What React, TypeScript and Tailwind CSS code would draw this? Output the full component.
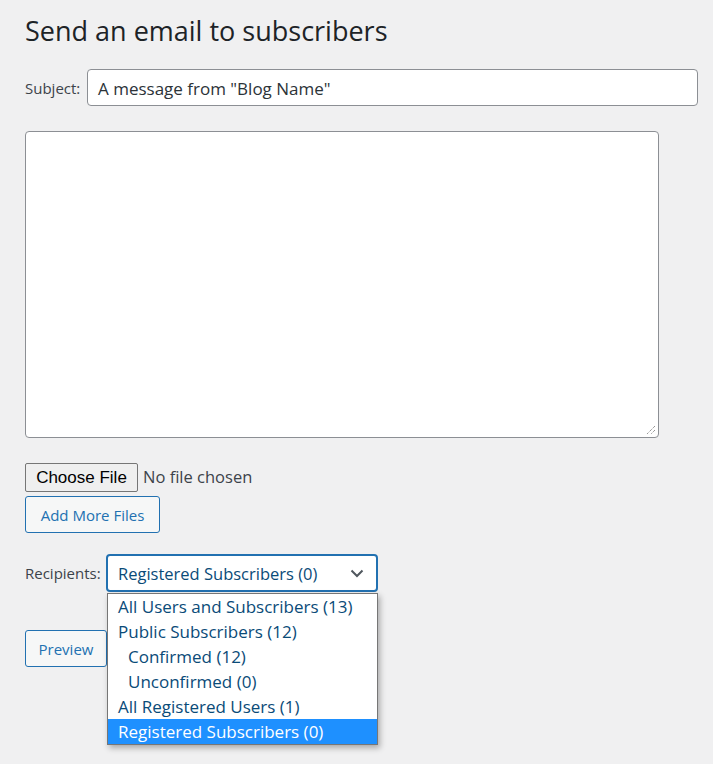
import React from "react";

const sans = { fontFamily: '"Open Sans", "Noto Sans", Arial, sans-serif' };

export default function App() {
  const options = [
    { label: "All Users and Subscribers (13)", indent: false },
    { label: "Public Subscribers (12)", indent: false },
    { label: "Confirmed (12)", indent: true },
    { label: "Unconfirmed (0)", indent: true },
    { label: "All Registered Users (1)", indent: false },
    { label: "Registered Subscribers (0)", indent: false, selected: true },
  ];
  return (
    <div className="min-h-[764px] w-[713px] bg-[#f0f0f1] pl-[25px] pt-[12px]" style={sans}>
      <h1 className="m-0 text-[27px] leading-[38px] font-normal text-[#1d2327]">
        Send an email to subscribers
      </h1>
      <div className="mt-[19px] flex items-center">
        <label className="w-[62px] pt-[2px] text-[15px] text-[#3c434a]">Subject:</label>
        <div className="flex h-[37px] w-[611px] items-center rounded-[4px] border border-[#8c8f94] bg-white px-[10px] pt-[2px] text-[17px] text-[#2c3338]">
          A message from "Blog Name"
        </div>
      </div>
      <div className="relative mt-[25px] h-[307px] w-[634px] rounded-[4px] border border-[#8c8f94] bg-white">
        <svg className="absolute bottom-[2px] right-[2px]" width="10" height="10" viewBox="0 0 10 10">
          <line x1="9" y1="1" x2="1" y2="9" stroke="#6b6b6b" strokeWidth="1" strokeDasharray="1 1" />
          <line x1="9" y1="5" x2="5" y2="9" stroke="#6b6b6b" strokeWidth="1" strokeDasharray="1 1" />
        </svg>
      </div>
      <div className="mt-[25px] flex items-center">
        <div
          className="flex h-[29px] w-[113px] items-center justify-center whitespace-nowrap rounded-[2px] border border-[#767676] bg-[#efefef] text-[17px] text-black"
          style={{ fontFamily: '"Liberation Sans", Arial, sans-serif' }}
        >
          Choose File
        </div>
        <span className="ml-[5px] whitespace-nowrap text-[16.5px] text-[#3c434a]">No file chosen</span>
      </div>
      <div className="mt-[4px] flex h-[37px] w-[135px] items-center justify-center rounded-[3px] border border-[#2271b1] bg-[#f6f7f7] pt-[1px] text-[15px] text-[#2271b1]">
        Add More Files
      </div>
      <div className="relative mt-[21px] flex items-center">
        <label className="w-[81px] text-[15px] text-[#3c434a]">Recipients:</label>
        <div className="relative">
          <div className="flex h-[38px] w-[272px] items-center justify-between rounded-[4px] border-2 border-[#2271b1] bg-white pl-[10px] pr-[12px] text-[16.5px] text-[#0a4b78]">
            <span className="pt-[3px]">Registered Subscribers (0)</span>
            <svg width="14" height="9" viewBox="0 0 14 9">
              <path d="M1.5 1.5 L7 7 L12.5 1.5" fill="none" stroke="#50575e" strokeWidth="2" />
            </svg>
          </div>
          <div className="absolute left-[1px] top-[39px] z-10 w-[271px] border border-[#767676] bg-white shadow-[2px_3px_6px_rgba(0,0,0,0.3)]">
            {options.map((o) => (
              <div
                key={o.label}
                className={
                  "flex h-[25px] items-center whitespace-nowrap text-[17px] " +
                  (o.selected ? "bg-[#1e90ff] text-white" : "text-[#0a4b78]") +
                  (o.indent ? " pl-[20px]" : " pl-[10px]")
                }
              >
                {o.label}
              </div>
            ))}
          </div>
        </div>
      </div>
      <div className="mt-[38px] flex h-[37px] w-[82px] items-center justify-center rounded-[3px] border border-[#2271b1] bg-[#f6f7f7] pt-[1px] text-[15px] text-[#2271b1]">
        Preview
      </div>
    </div>
  );
}
